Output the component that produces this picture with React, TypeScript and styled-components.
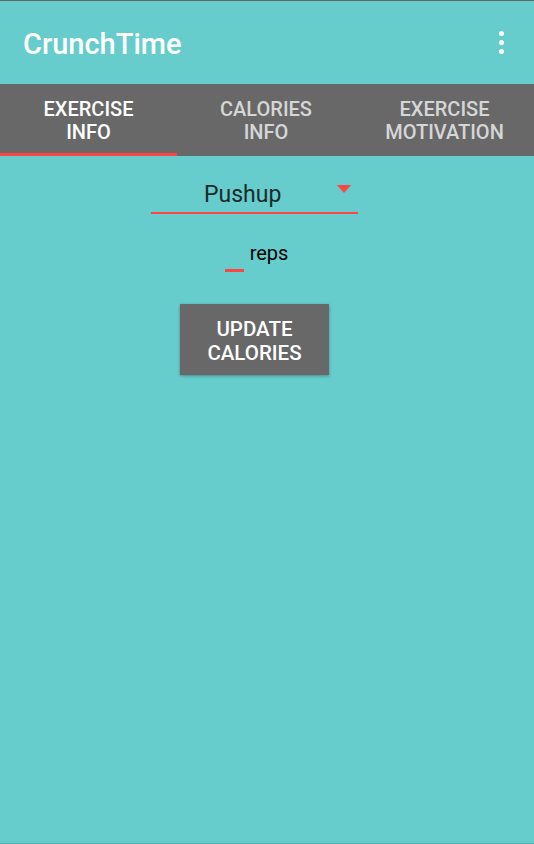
import React from 'react'
import styled, { createGlobalStyle } from 'styled-components'

const GlobalStyle = createGlobalStyle`
  html, body {
    margin: 0;
    padding: 0;
    background: #66cccc;
  }
  body {
    font-family: Roboto, "Noto Sans", sans-serif;
  }
`

const Screen = styled.div`
  width: 534px;
  height: 844px;
  box-sizing: border-box;
  background: #66cccc;
  border-top: 1px solid #5f6b6b;
  border-bottom: 1px solid #57b3b3;
  display: flex;
  flex-direction: column;
`

const AppBar = styled.header`
  height: 83px;
  display: flex;
  align-items: center;
  justify-content: space-between;
  padding: 0 30px 0 23px;
  box-sizing: border-box;
`

const Title = styled.h1`
  margin: 0;
  margin-top: 2px;
  font-size: 29px;
  font-weight: 500;
  color: #ffffff;
`

const Overflow = styled.div`
  display: flex;
  flex-direction: column;
  gap: 4px;
`

const Dot = styled.span`
  width: 5px;
  height: 5px;
  border-radius: 50%;
  background: #ffffff;
`

const TabBar = styled.nav`
  height: 72px;
  background: #686868;
  display: grid;
  grid-template-columns: 177px 178px 179px;
`

const Tab = styled.div<{ $active?: boolean }>`
  position: relative;
  display: flex;
  align-items: center;
  justify-content: center;
  text-align: center;
  font-size: 20px;
  font-weight: 500;
  line-height: 23px;
  padding-top: 1px;
  color: ${p => (p.$active ? '#ffffff' : '#d6d6d6')};
  text-transform: uppercase;
  &::after {
    content: '';
    display: ${p => (p.$active ? 'block' : 'none')};
    position: absolute;
    left: 0;
    right: 0;
    bottom: 0;
    height: 3px;
    background: #ff4444;
  }
`

const Content = styled.main`
  display: flex;
  flex-direction: column;
  align-items: center;
  padding-top: 18px;
  padding-right: 26px;
`

const Spinner = styled.div`
  position: relative;
  width: 207px;
  height: 40px;
  margin-left: 1px;
  border-bottom: 2px solid #ff4444;
  display: flex;
  align-items: center;
  padding-left: 53px;
  box-sizing: border-box;
`

const SpinnerText = styled.span`
  font-size: 23px;
  color: #1b2b2b;
  margin-top: 3px;
`

const Arrow = styled.span`
  position: absolute;
  right: 7px;
  top: 11px;
  width: 0;
  height: 0;
  border-left: 7px solid transparent;
  border-right: 7px solid transparent;
  border-top: 8px solid #ff4444;
`

const RepsRow = styled.div`
  display: flex;
  align-items: flex-start;
  gap: 6px;
  margin-top: 28px;
  margin-left: 5px;
`

const RepsInput = styled.span`
  width: 19px;
  height: 27px;
  border-bottom: 3px solid #ff4444;
`

const RepsLabel = styled.span`
  font-size: 20px;
  color: #000000;
  line-height: 22px;
`

const Button = styled.button`
  margin-top: 32px;
  margin-left: 1px;
  width: 149px;
  height: 71px;
  border: none;
  background: #686868;
  color: #ffffff;
  font-family: Roboto, "Noto Sans", sans-serif;
  font-size: 20.5px;
  font-weight: 500;
  line-height: 24px;
  text-transform: uppercase;
  box-shadow: 0 1px 3px rgba(0, 0, 0, 0.3);
  padding: 2px 0 0;
`

export default function App() {
  return (
    <>
      <GlobalStyle />
      <Screen>
        <AppBar>
          <Title>CrunchTime</Title>
          <Overflow>
            <Dot />
            <Dot />
            <Dot />
          </Overflow>
        </AppBar>
        <TabBar>
          <Tab $active>Exercise<br />Info</Tab>
          <Tab>Calories<br />Info</Tab>
          <Tab>Exercise<br />Motivation</Tab>
        </TabBar>
        <Content>
          <Spinner>
            <SpinnerText>Pushup</SpinnerText>
            <Arrow />
          </Spinner>
          <RepsRow>
            <RepsInput />
            <RepsLabel>reps</RepsLabel>
          </RepsRow>
          <Button>Update<br />Calories</Button>
        </Content>
      </Screen>
    </>
  )
}
